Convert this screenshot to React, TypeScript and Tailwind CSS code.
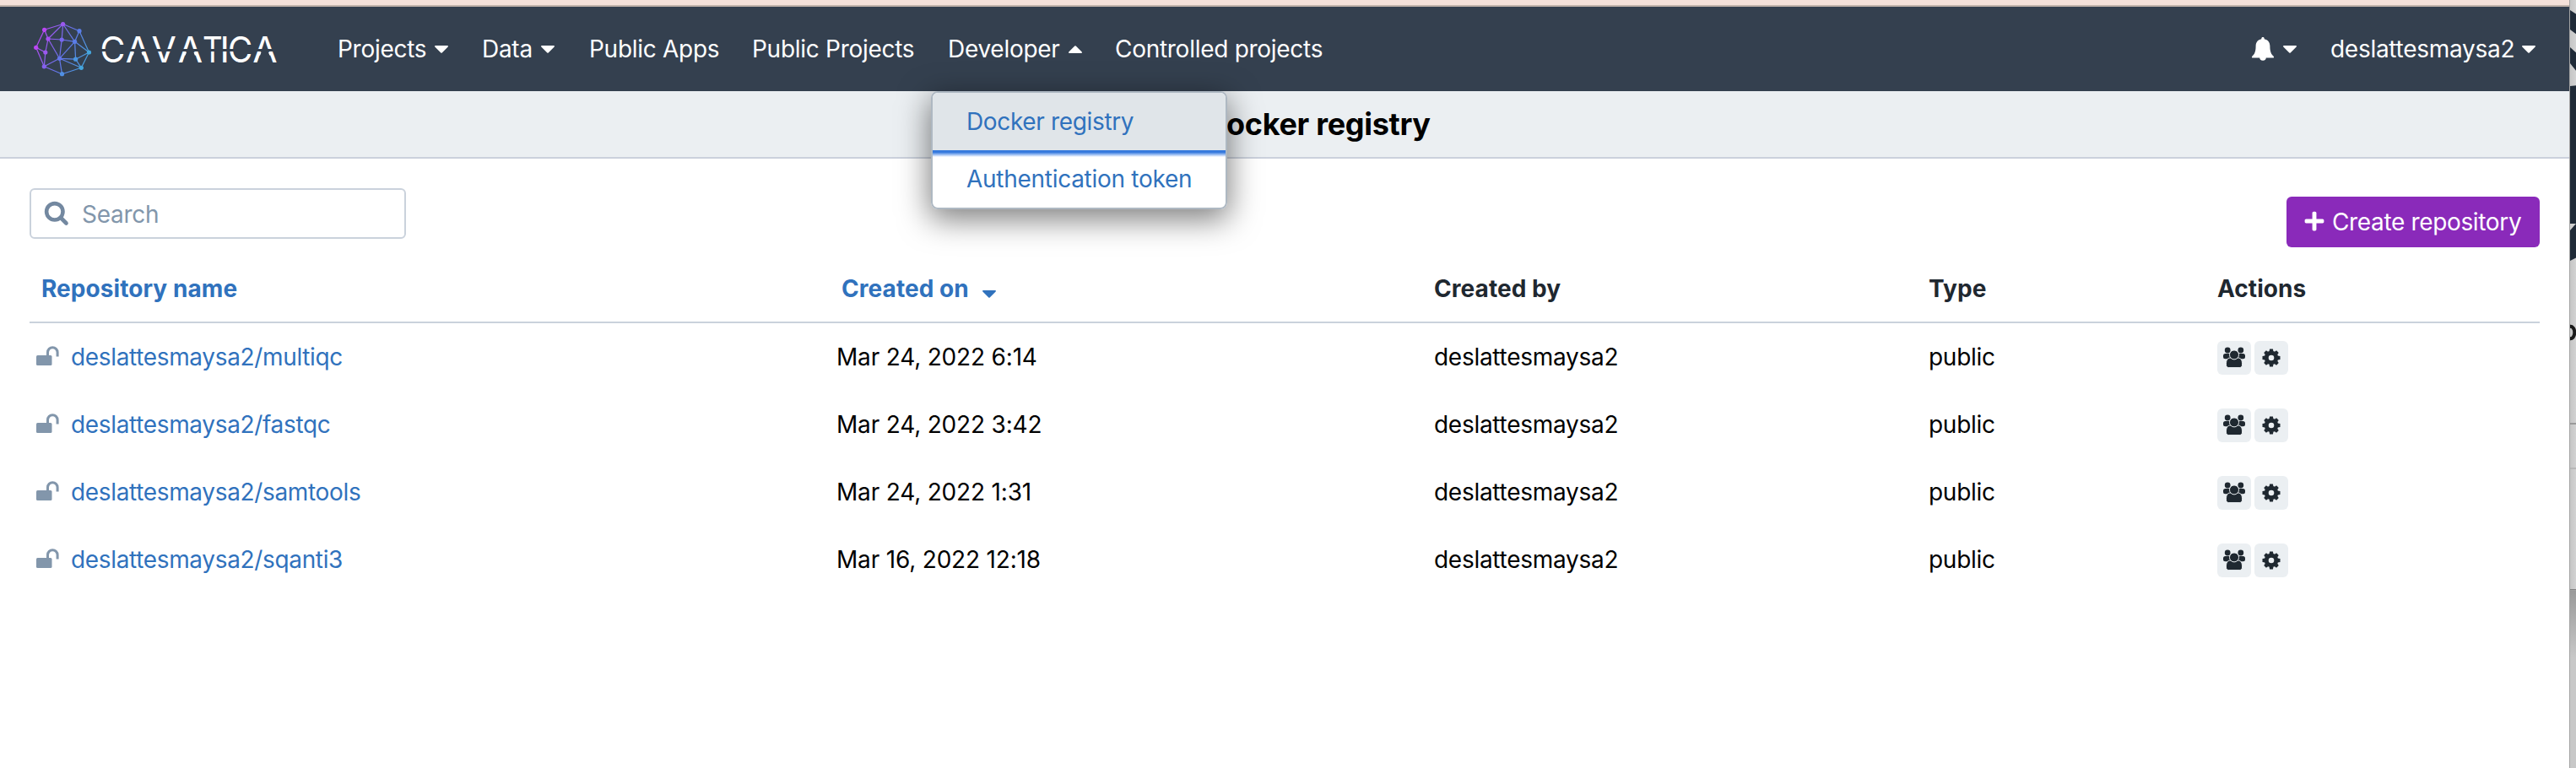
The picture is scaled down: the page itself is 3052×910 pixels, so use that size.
import { FaPlus } from "react-icons/fa";

const rows = [
  ["deslattesmaysa2/multiqc", "Mar 24, 2022 6:14"],
  ["deslattesmaysa2/fastqc", "Mar 24, 2022 3:42"],
  ["deslattesmaysa2/samtools", "Mar 24, 2022 1:31"],
  ["deslattesmaysa2/sqanti3", "Mar 16, 2022 12:18"],
];

const nodes: [number, number, string][] = [
  [42.7, 56.3, "#bb47f4"], [52.6, 35.3, "#bb47f4"], [74.6, 28.5, "#9b58ee"], [94, 36.7, "#5b7de8"],
  [105.5, 62, "#45a5dc"], [96.3, 80.3, "#45a5dc"], [73.5, 87.7, "#5090e4"], [52.3, 78.8, "#8560ee"],
  [57, 46, "#a551f0"], [53.8, 62, "#9b58ee"], [73.2, 47, "#7868ee"], [88.6, 49.3, "#5b7de8"],
  [70.5, 69.3, "#6376ea"], [89.6, 70.2, "#4a96e2"],
];
const edges = [
  [0, 1], [1, 2], [2, 3], [3, 4], [4, 5], [5, 6], [6, 7], [7, 0], [1, 8], [0, 9], [9, 7], [8, 9],
  [8, 2], [8, 10], [10, 11], [2, 10], [2, 11], [3, 11], [11, 4], [11, 13], [11, 12], [8, 12], [10, 12],
  [12, 7], [12, 6], [12, 13], [12, 5], [13, 4], [13, 5],
];

function Mark() {
  return (
    <svg className="h-[100px] w-[80px] shrink-0" viewBox="36 8 80 100">
      <defs>
        <linearGradient id="mark" gradientUnits="userSpaceOnUse" x1="42" y1="45" x2="106" y2="72">
          <stop offset="0" stopColor="#bb47f4" />
          <stop offset="0.55" stopColor="#6376ea" />
          <stop offset="1" stopColor="#45a5dc" />
        </linearGradient>
      </defs>
      {edges.map(([a, b], i) => (
        <path key={i} d={`M${nodes[a][0]} ${nodes[a][1]}L${nodes[b][0]} ${nodes[b][1]}`} stroke="url(#mark)" strokeWidth="1.2" />
      ))}
      {nodes.map(([x, y, c], i) => (
        <circle key={i} cx={x} cy={y} r="2.6" fill={c} />
      ))}
    </svg>
  );
}

function OpenA({ w }: { w: string }) {
  return (
    <span className={"inline-flex justify-center " + w}>
      <span className="[clip-path:polygon(0_0,100%_0,100%_100%,81%_100%,81%_66.5%,50%_41.5%,19%_66.5%,19%_100%,0_100%)]">A</span>
    </span>
  );
}

function Wordmark() {
  return (
    <div className="relative ml-[3.5px] h-[100px] text-[42.6px] leading-[101px] whitespace-nowrap text-white">
      <span className="inline-flex w-[29px] justify-center"><span className="relative left-[-1px] scale-x-[0.96]">C</span></span>
      <OpenA w="w-[29.5px]" />
      <span className="inline-flex w-[32px] justify-center">V</span>
      <OpenA w="w-[30.5px]" />
      <span className="inline-flex w-[22px] justify-center"><span className="scale-x-[0.86]">T</span></span>
      <span className="inline-flex w-[7px] justify-center">I</span>
      <span className="inline-flex w-[30px] justify-center"><span className="scale-x-[0.94]">C</span></span>
      <OpenA w="w-[28.5px]" />
      <div className="absolute top-[50px] left-0 h-[3px] w-full bg-[#34404f]" />
    </div>
  );
}

function Caret({ className }: { className: string }) {
  return (
    <svg className={"h-[9px] w-[16px] shrink-0 " + className} viewBox="0 0 16 9" fill="currentColor">
      <path d="M1 0h14c.9 0 1.300.9.7 1.500L8.700 8.500a1 1 0 0 1-1.400 0L.3 1.500C-.3.900.1 0 1 0z" />
    </svg>
  );
}

function Bell() {
  return (
    <svg className="h-[28px] w-[26px]" viewBox="0 0 26 28" fill="currentColor">
      <path d="M13 0c1 0 1.700.7 1.700 1.700v.6c4.200.8 6.700 4 6.700 8.200 0 7 1.600 9.800 4.300 12.300.7.700.3 1.700-.7 1.700H1c-1 0-1.400-1-.7-1.700 2.700-2.500 4.300-5.300 4.300-12.300 0-4.200 2.500-7.400 6.700-8.200v-.6C11.300.7 12 0 13 0z" />
      <path d="M9.200 24h7.600a3.800 3.800 0 0 1-7.600 0z" />
    </svg>
  );
}

function Gear() {
  return (
    <svg className="size-[22px]" viewBox="-11 -11 22 22" fill="#1f2830">
      <circle r="5.800" fill="none" stroke="#1f2830" strokeWidth="5" />
      {[0, 45, 90, 135, 180, 225, 270, 315].map((a) => (
        <path key={a} transform={`rotate(${a})`} d="M-2.500 -7.500L-1.900 -10.500H1.900L2.500 -7.500z" />
      ))}
    </svg>
  );
}

function Unlock() {
  return (
    <svg className="mt-[-2px] h-[24px] w-[28px]" viewBox="0 0 28 24">
      <rect x="0" y="11" width="18.5" height="12" rx="1.5" fill="#8296ab" />
      <path d="M13.5 12V7.5a5.6 5.6 0 0 1 11.6 0V12.500" fill="none" stroke="#8296ab" strokeWidth="3" />
    </svg>
  );
}

function Group() {
  return (
    <svg className="h-[26px] w-[26px]" viewBox="0 0 26 26" fill="#1f2830">
      <circle cx="5.2" cy="4" r="3.4" />
      <circle cx="20.8" cy="4" r="3.4" />
      <rect x="0" y="8" width="9" height="6.2" rx="2.5" />
      <rect x="17" y="8" width="9" height="6.2" rx="2.5" />
      <path d="M3.4 21c0-5 1.4-8 5-8h9.200c3.600 0 5 3 5 8 0 2.200-1.400 3.600-3.400 3.600H6.800c-2 0-3.400-1.400-3.400-3.600z" stroke="#ebeff2" strokeWidth="1" />
      <circle cx="13" cy="9.400" r="5.500" stroke="#ebeff2" strokeWidth="1" />
    </svg>
  );
}

function BackWindow() {
  return (
    <div className="h-[910px] w-[8px] shrink-0 overflow-hidden border-l border-[#a3a3a3] bg-linear-to-r from-[#c6c6c6] to-[#d2d2d2]">
      <svg className="h-[910px] w-[8px]" viewBox="0 0 8 910">
        <g fill="#1f2a37">
          <path d="M0 12L8 17V41L0 35z" />
          <path d="M0 56L8 63V85L0 75z" />
          <path d="M0 102L8 101V305L0 309z" />
        </g>
        <path d="M0 265H7L0 273z" fill="#cfcfcf" />
        <ellipse cx="0.500" cy="394" rx="4.800" ry="7.200" fill="none" stroke="#1a1a1a" strokeWidth="4" />
        <path d="M0 501h8v2H0z" fill="#9a9a9a" />
        <path d="M0 554h8v2H0z" fill="#b8b8b8" />
        <path d="M0 698h8v1.500H0z" fill="#808080" />
        <defs>
          <linearGradient id="fade" x1="0" y1="0" x2="0" y2="1">
            <stop offset="0" stopColor="#999999" />
            <stop offset="1" stopColor="#c8c8c8" />
          </linearGradient>
        </defs>
        <rect y="699.500" width="8" height="80" fill="url(#fade)" />
        <rect y="779" width="8" height="131" fill="#c8c8c8" />
      </svg>
    </div>
  );
}

export default function App() {
  return (
    <div className="flex h-[910px] w-[3052px] overflow-hidden bg-white font-['Inter','Liberation_Sans',sans-serif] text-[28px] leading-[40px] tracking-[-0.28px] text-black">
      <div className="w-[3044px] shrink-0">
        <div className="h-[8px] border-b-2 border-[#c0b2aa] bg-[#f4e1da]" />
        <header className="flex h-[100px] items-center bg-[#34404f] pl-[36px] text-white">
          <Mark />
          <Wordmark />
          <nav className="ml-[72px] flex h-full items-center">
            <div className="flex w-[171px] items-center">Projects<Caret className="ml-[10px]" /></div>
            <div className="flex w-[127px] items-center">Data<Caret className="ml-[10px]" /></div>
            <div className="w-[193px]">Public Apps</div>
            <div className="w-[232px]">Public Projects</div>
            <div className="relative flex h-full w-[198px] items-center">
              Developer<Caret className="ml-[10px] rotate-180" />
              <div className="absolute top-[100px] left-[-20px] z-10 w-[351px] overflow-hidden rounded-[8px] border-2 border-[#aeb8c2] bg-white text-[#3072bd]">
                <div className="h-[68px] bg-[#e0e5e9] pt-[14px] pl-[40px] tracking-[-0.35px]">Docker registry</div>
                <div className="h-[8px] bg-linear-to-b from-[#3579dd] from-30% to-white" />
                <div className="h-[60px] pt-[6px] pl-[40px]">Authentication token</div>
              </div>
              <div className="absolute top-[100px] left-[-20px] h-[140px] w-[351px] rounded-[8px] shadow-[0_10px_36px_2px_rgba(0,0,0,0.5)]" />
            </div>
            <div>Controlled projects</div>
          </nav>
          <div className="ml-auto flex items-center pr-[40px]">
            <Bell />
            <Caret className="ml-[11px]" />
            <span className="ml-[40px] w-[217px]">deslattesmaysa2</span>
            <Caret className="ml-[10px]" />
          </div>
        </header>
        <div className="flex h-[80px] items-center justify-center border-b-2 border-[#cbd1dc] bg-[#ebeff2] pl-[78px] text-[36px] font-bold tracking-[-0.3px]">
          Docker registry
        </div>
        <main className="pr-[35px] pl-[35px]">
          <div className="flex h-[114px] justify-between">
            <div className="mt-[35px] flex h-[60px] w-[446px] items-center rounded-[6px] border-2 border-[#cad2dc] pl-[15px] text-[#8296ab]">
              <svg className="size-[30px]" viewBox="0 0 30 30" fill="none" stroke="#7388a0" strokeWidth="4.600" strokeLinecap="round">
                <circle cx="12.800" cy="12.800" r="9.700" />
                <path d="M20.500 20.500L26.500 26.500" />
              </svg>
              <span className="ml-[15px] pt-[2px]">Search</span>
            </div>
            <button className="mt-[45px] flex h-[60px] w-[300px] items-center rounded-[6px] bg-[#8a2aba] pl-[20px] tracking-[-0.35px] text-white">
              <FaPlus className="mt-[-2px] size-[26px]" />
              <span className="ml-[8px]">Create repository</span>
            </button>
          </div>
          <div className="flex h-[81px] items-center border-b-2 border-[#cad2dc] font-bold tracking-[0.06px] text-[#1f2830]">
            <div className="w-[962px] pl-[14px] text-[#3072bd]">Repository name</div>
            <div className="flex w-[702px] items-center text-[#3072bd]">
              Created on<Caret className="mt-[14px] ml-[16px]" />
            </div>
            <div className="w-[586px]">Created by</div>
            <div className="w-[342px]">Type</div>
            <div>Actions</div>
          </div>
          {rows.map(([name, date]) => (
            <div key={name} className="flex h-[80px] items-center">
              <div className="flex w-[956px] items-center pl-[8px] text-[#3072bd]">
                <Unlock />
                <span className="ml-[13px] tracking-[-0.34px]">{name}</span>
              </div>
              <div className="w-[708px] tracking-[-0.18px]">{date}</div>
              <div className="w-[586px]">deslattesmaysa2</div>
              <div className="w-[342px]">public</div>
              <div className="mt-[2px] flex gap-[4px]">
                <div className="flex size-[40px] items-center justify-center rounded-[6px] bg-[#ebeff2]"><Group /></div>
                <div className="flex size-[40px] items-center justify-center rounded-[6px] bg-[#ebeff2]"><Gear /></div>
              </div>
            </div>
          ))}
        </main>
      </div>
      <BackWindow />
    </div>
  );
}
